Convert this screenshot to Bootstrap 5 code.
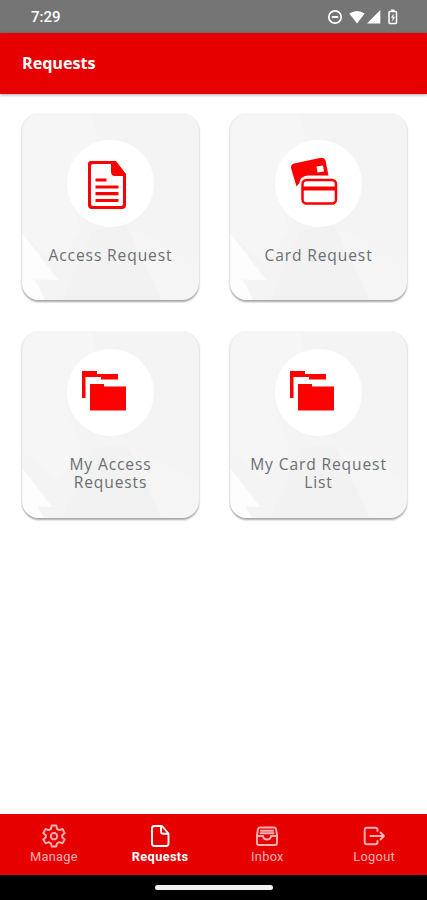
<!DOCTYPE html>
<html lang="en">
<head>
<meta charset="utf-8">
<meta name="viewport" content="width=device-width, initial-scale=1">
<title>Requests</title>
<link href="https://cdn.jsdelivr.net/npm/bootstrap@5.3.0/dist/css/bootstrap.min.css" rel="stylesheet">
<style>
  body { font-family: "Open Sans", sans-serif; background: #fff; }
  .screen { height: 900px; width: 427px; }
  .status { height: 33px; background: #757575; padding: 1px 28px 0 31px; font: 500 15px/1 Roboto, sans-serif; }
  .topbar { height: 61px; background: #e60000; padding: 0 22px; box-shadow: 0 1px 3px rgba(0,0,0,.35); }
  .topbar h1 { font-size: 16.3px; font-weight: 700; letter-spacing: -.1px; }
  .tiles { display: grid; grid-template-columns: 177px 177px; gap: 31.5px 31px; padding: 20px 20px 0 22px; }
  .tile { height: 186px; border-radius: 17px; background: #f4f4f4; box-shadow: 0 1.5px 2px rgba(0,0,0,.34), 0 0 3px rgba(0,0,0,.05); padding-bottom: 10px; color: #6a6f73; }
  .facets { position: absolute; inset: 0; width: 100%; height: 100%; }
  .disc { width: 87px; height: 87px; background: #fff; color: #ff0000; }
  .disc svg { flex: none; }
  .doc-icon { margin: 3px 8px 0 0; }
  .cards-icon { margin: -6px 10px 0 0; }
  .folder-icon { margin: 0 14px 3px 0; }
  .tile-label { margin-top: 19px; font-size: 15.6px; line-height: 18px; letter-spacing: .87px; }
  .tabs { height: 61px; background: #e60000; font-family: Roboto, sans-serif; font-size: 12.8px; line-height: 15px; letter-spacing: .3px; }
  .tabs a { color: #ffb3b3; padding: 10px 0 0 1px; }
  .tabs a.active { color: #fff; font-weight: 700; letter-spacing: .35px; padding-left: 0; }
  .tabs svg { display: block; margin-bottom: 1px; fill: none; stroke: currentColor; stroke-width: 1.9; stroke-linejoin: round; stroke-linecap: round; }
  .homebar { height: 25px; background: #000; }
  .pill { width: 118px; height: 5px; background: #f2f2f2; }
</style>
<script src="https://cdn.jsdelivr.net/npm/bootstrap@5.3.0/dist/js/bootstrap.bundle.min.js"></script>
</head>
<body>
<svg class="d-none">
  <symbol id="facets" viewBox="0 0 177 187">
    <path d="M0 0H70L76 34L42 70L60 118L35 150L0 120Z" fill="#fff" opacity=".2"/>
    <path d="M70 118L104 112L140 187H40Z" fill="#ececec" opacity=".25"/>
    <path d="M104 112L140 187H177V150Z" fill="#fff" opacity=".15"/>
  </symbol>
  <symbol id="folders" viewBox="0 0 46 42">
    <path d="M1 28V1H16V4H37V9.500H20V7H4.500V28Z" fill="currentColor"/>
    <path d="M9 14H23V16.500H45V40.500H9Z" fill="currentColor"/>
  </symbol>
</svg>
<div class="screen d-flex flex-column overflow-hidden">
  <div class="status d-flex align-items-center justify-content-between text-white">
    <span>7:29</span>
    <svg width="72" height="18" viewBox="0 0 72 18" fill="none" stroke="#fff">
      <circle cx="8" cy="9" r="6.200" stroke-width="1.700"/><path d="M4.800 9H11.200" stroke-width="1.900"/>
      <path d="M22.300 5.500Q30 .500 37.700 5.500L30 15.500Z" fill="#fff" stroke="none"/>
      <path d="M53.300 2V15.500H40Z" fill="#fff" stroke="none"/>
      <rect x="62" y="3.500" width="7.500" height="12" rx="1" stroke-width="1.500"/><path d="M64 2.500H67.500" stroke-width="2"/>
      <path d="M66.500 5.500L64 9.800H65.500V13.500L68 9H66.500Z" fill="#fff" stroke="none"/>
    </svg>
  </div>
  <header class="topbar d-flex align-items-center text-white"><h1 class="m-0">Requests</h1></header>

  <main class="flex-grow-1">
    <div class="tiles">
      <a class="tile position-relative overflow-hidden d-flex flex-column align-items-center justify-content-center text-center text-decoration-none" href="#">
        <svg class="facets" viewBox="0 0 177 187"><use href="#facets"/><path d="M0 120L36 167L12 166.500L23 187H0Z" fill="#fff" opacity=".8"/></svg>
        <span class="disc rounded-circle position-relative d-flex align-items-center justify-content-center">
          <svg class="doc-icon" width="40" height="50" viewBox="0 0 40 50">
            <path d="M4 1H29L39 14V45Q39 49 35 49H5Q1 49 1 45V4Q1 1 4 1Z M6 4Q4 4 4 6V44Q4 46 6 46H34Q36 46 36 44V16H28Q24 16 24 12V4Z" fill="currentColor" fill-rule="evenodd"/>
            <path d="M8.500 20H19.500M8.500 27H31.500M8.500 33.700H31.500M8.500 40.500H31.500" stroke="currentColor" stroke-width="3.200"/>
          </svg>
        </span>
        <span class="tile-label position-relative">Access Request</span>
      </a>
      <a class="tile position-relative overflow-hidden d-flex flex-column align-items-center justify-content-center text-center text-decoration-none" href="#">
        <svg class="facets" viewBox="0 0 177 187"><use href="#facets"/><path d="M0 120L36 167L12 166.500L23 187H0Z" fill="#fff" opacity=".8"/></svg>
        <span class="disc rounded-circle position-relative d-flex align-items-center justify-content-center">
          <svg class="cards-icon" width="48" height="48" viewBox="0 0 48 48">
            <path d="M4 6.500L31 .800Q34.500 .300 35.500 3.500L38.500 18.500H18Q10 19 9.500 26L6.500 29.500L1 11Q.500 7.500 4 6.500Z M26.500 9.500L27.500 15.500L34 14.500L33 8.500Z" fill="currentColor" fill-rule="evenodd"/>
            <rect x="12.500" y="23" width="33.500" height="23.500" rx="4" fill="none" stroke="currentColor" stroke-width="2.500"/>
            <path d="M12.500 31.500H46" stroke="currentColor" stroke-width="4.200"/>
          </svg>
        </span>
        <span class="tile-label position-relative">Card Request</span>
      </a>
      <a class="tile position-relative overflow-hidden d-flex flex-column align-items-center justify-content-center text-center text-decoration-none" href="#">
        <svg class="facets" viewBox="0 0 177 187"><use href="#facets"/><path d="M0 137L30 176L15 175.500L22 187H0Z" fill="#fff" opacity=".8"/></svg>
        <span class="disc rounded-circle position-relative d-flex align-items-center justify-content-center">
          <svg class="folder-icon" width="46" height="42"><use href="#folders"/></svg>
        </span>
        <span class="tile-label position-relative">My Access<br>Requests</span>
      </a>
      <a class="tile position-relative overflow-hidden d-flex flex-column align-items-center justify-content-center text-center text-decoration-none" href="#">
        <svg class="facets" viewBox="0 0 177 187"><use href="#facets"/><path d="M0 137L30 176L15 175.500L22 187H0Z" fill="#fff" opacity=".8"/></svg>
        <span class="disc rounded-circle position-relative d-flex align-items-center justify-content-center">
          <svg class="folder-icon" width="46" height="42"><use href="#folders"/></svg>
        </span>
        <span class="tile-label position-relative">My Card Request<br>List</span>
      </a>
    </div>
  </main>

  <nav class="tabs d-flex">
    <a class="col-3 d-flex flex-column align-items-center text-decoration-none" href="#">
      <svg width="24" height="24" viewBox="0 0 24 24"><path d="M9.700 1.500H14.300L15 4.800L17.300 6.100L20.500 5L22.700 9L20.200 11.200V13.300L22.700 15.500L20.500 19.300L17.300 18.200L15 19.500L14.300 22.500H9.700L9 19.500L6.700 18.200L3.500 19.300L1.300 15.500L3.800 13.300V11.200L1.300 9L3.500 5L6.700 6.100L9 4.800Z"/><circle cx="12" cy="12.200" r="3.200"/></svg>
      Manage
    </a>
    <a class="active col-3 d-flex flex-column align-items-center text-decoration-none" href="#">
      <svg width="24" height="24" viewBox="0 0 24 24"><path d="M6.500 2H14L20.500 9.500V19.500Q20.500 22 18 22H6.500Q4 22 4 19.500V4.500Q4 2 6.500 2ZM13 2.500V7.500Q13 9.700 15.200 9.700H20"/></svg>
      Requests
    </a>
    <a class="col-3 d-flex flex-column align-items-center text-decoration-none" href="#">
      <svg width="24" height="24" viewBox="0 0 24 24"><path d="M5 3.500H19Q20.500 3.500 21 5L22 11V19Q22 21 20 21H4Q2 21 2 19V11L3 5Q3.500 3.500 5 3.500ZM2 12H8Q8.500 15.500 12 15.500T16 12H22M6 6.700H18M5.500 9.300H18.500"/></svg>
      Inbox
    </a>
    <a class="col-3 d-flex flex-column align-items-center text-decoration-none" href="#">
      <svg width="24" height="24" viewBox="0 0 24 24"><path d="M15.500 7V6Q15.500 3.700 13.200 3.700H5Q2.700 3.700 2.700 6V18Q2.700 20.300 5 20.300H13.200Q15.500 20.300 15.500 18V17M8.500 12H22M18.500 8.500L22 12L18.500 15.500"/></svg>
      Logout
    </a>
  </nav>
  <div class="homebar d-flex align-items-center justify-content-center"><div class="pill rounded-pill"></div></div>
</div>
</body>
</html>
